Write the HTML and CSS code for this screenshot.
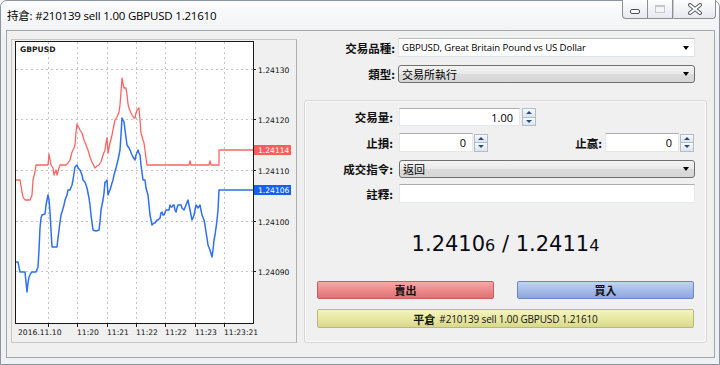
FILE: index.html
```html
<!DOCTYPE html>
<html>
<head>
<meta charset="utf-8">
<link rel="stylesheet" href="styles.css">
</head>
<body>
<div class="window">
  <div class="titlebar">
    <div class="title">持倉: #210139 sell 1.00 GBPUSD 1.21610</div>
    <div class="wbtns">
      <div class="wbtn wmin"><span class="minbar"></span></div>
      <div class="wbtn wmax"><span class="maxbox"></span></div>
      <div class="wbtn wclose">
        <svg width="16" height="12" viewBox="0 0 16 12"><path d="M3 2 L13 10 M13 2 L3 10" stroke="#5b6068" stroke-width="4" stroke-linecap="round" fill="none"/><path d="M3 2 L13 10 M13 2 L3 10" stroke="#fff" stroke-width="2" stroke-linecap="round" fill="none"/></svg>
      </div>
    </div>
  </div>
  <div class="client">
    <div class="chartpanel">
      <svg class="chart" width="284" height="302" viewBox="12 40 284 302">
        <rect x="15.5" y="41.5" width="238" height="282" fill="#fff"/>
        <g stroke="#c4c4c4" stroke-width="1" stroke-dasharray="2 3">
          <line x1="16" y1="69.5" x2="253" y2="69.5"/>
          <line x1="16" y1="119.5" x2="253" y2="119.5"/>
          <line x1="16" y1="170.5" x2="253" y2="170.5"/>
          <line x1="16" y1="221.5" x2="253" y2="221.5"/>
          <line x1="16" y1="271.5" x2="253" y2="271.5"/>
          <line x1="48.5" y1="42" x2="48.5" y2="323"/>
          <line x1="77.5" y1="42" x2="77.5" y2="323"/>
          <line x1="107.5" y1="42" x2="107.5" y2="323"/>
          <line x1="136.5" y1="42" x2="136.5" y2="323"/>
          <line x1="165.5" y1="42" x2="165.5" y2="323"/>
          <line x1="195.5" y1="42" x2="195.5" y2="323"/>
          <line x1="224.5" y1="42" x2="224.5" y2="323"/>
        </g>
        <polyline fill="none" stroke="#ff6464" stroke-width="1.3" stroke-linejoin="round" points="16,180 20,180 22,192 23,197 25,200 30,200 32,195 33,180 35,172 36,165 48,165 49,154 51,165 53,168 54,175 56,170 57,175 59,168 60,165 66,165 68,163 70,160 72,152 74,148 75,145 76,132 77,124 79,128 80,130 82,133 84,140 86,145 88,150 90,157 92,162 94,166 95,168 97,166 99,165 101,162 103,155 105,150 106,143 107,138 108,153 109,148 110,143 112,135 113,130 114,125 115,120 117,117 119,112 120,105 121,92 122,78 123,84 124,88 126,88 127,95 128,104 129,108 131,113 132,115 134,118 135,118 136,113 137,110 139,108 140,120 141,133 143,140 144,143 145,150 146,158 147,165 189,165 190,161 191,165 209,165 210,161 211,165 219,165 219,150 253,150"/>
        <polyline fill="none" stroke="#2f6ff2" stroke-width="1.5" stroke-linejoin="round" points="16,262 18,262 20,272 25,272 26,282 27,292 28,283 29,277 31,273 32,272 36,272 38,267 39,250 40,228 41,218 42,215 45,214 46,205 48,195 49,200 50,212 51,230 52,247 57,247 58,238 60,222 61,215 62,212 64,205 65,200 67,195 68,190 70,190 72,185 73,180 75,167 77,165 78,168 80,170 82,175 83,180 85,182 87,188 88,193 89,198 90,205 91,215 93,230 96,231 99,230 100,222 101,210 103,200 104,193 105,182 106,182 107,180 108,195 109,192 110,190 112,183 113,180 114,175 116,168 118,160 120,150 121,135 122,118 123,120 124,122 125,130 127,145 129,148 130,150 132,155 133,157 135,160 136,155 138,150 139,153 140,155 141,165 143,180 145,180 146,188 148,195 149,205 150,215 152,225 154,223 155,223 157,220 158,220 160,218 161,213 162,212 163,215 164,215 166,210 167,210 169,210 170,205 171,207 172,207 173,205 174,205 175,210 176,212 177,208 178,205 181,205 182,208 184,210 186,205 188,200 189,205 190,210 191,215 192,220 193,218 194,215 195,210 196,205 198,208 200,205 201,210 202,215 204,220 205,225 206,232 207,238 208,245 210,250 212,257 213,250 214,240 215,235 216,228 217,220 218,210 219,190 253,190"/>
        <rect x="15.5" y="41.5" width="238" height="282" fill="none" stroke="#1a1a1a" stroke-width="1"/>
        <g stroke="#1a1a1a" stroke-width="1">
          <line x1="253" y1="69.5" x2="256" y2="69.5"/>
          <line x1="253" y1="119.5" x2="256" y2="119.5"/>
          <line x1="253" y1="170.5" x2="256" y2="170.5"/>
          <line x1="253" y1="221.5" x2="256" y2="221.5"/>
          <line x1="253" y1="271.5" x2="256" y2="271.5"/>
          <line x1="48.5" y1="323" x2="48.5" y2="327"/>
          <line x1="77.5" y1="323" x2="77.5" y2="327"/>
          <line x1="107.5" y1="323" x2="107.5" y2="327"/>
          <line x1="136.5" y1="323" x2="136.5" y2="327"/>
          <line x1="165.5" y1="323" x2="165.5" y2="327"/>
          <line x1="195.5" y1="323" x2="195.5" y2="327"/>
          <line x1="224.5" y1="323" x2="224.5" y2="327"/>
        </g>
        <text class="sym" x="20" y="52">GBPUSD</text>
        <g class="ax">
          <text x="258" y="72.5">1.24130</text>
          <text x="258" y="122.5">1.24120</text>
          <text x="258" y="173.5">1.24110</text>
          <text x="258" y="224.5">1.24100</text>
          <text x="258" y="274.5">1.24090</text>
          <text x="18" y="335">2016.11.10</text>
          <text x="77" y="335">11:20</text>
          <text x="107" y="335">11:21</text>
          <text x="136" y="335">11:22</text>
          <text x="165" y="335">11:22</text>
          <text x="195" y="335">11:23</text>
          <text x="224" y="335">11:23:21</text>
        </g>
        <rect x="254" y="145" width="37" height="10" fill="#ff5c5c"/>
        <rect x="254" y="185" width="37" height="10" fill="#1660f0"/>
        <g class="ax tag">
          <text x="258" y="153">1.24114</text>
          <text x="258" y="193">1.24106</text>
        </g>
      </svg>
    </div>
    <div class="side">
      <div class="toprow">
        <div class="lbl wide">交易品種:</div>
        <div class="combo flat"><span class="ctext sym-name">GBPUSD, Great Britain Pound vs US Dollar</span><span class="arrow"></span></div>
      </div>
      <div class="toprow r2">
        <div class="lbl wide">類型:</div>
        <div class="combo btnlike"><span class="ctext">交易所執行</span><span class="arrow"></span></div>
      </div>
      <div class="group">
        <div class="grow">
          <div class="lbl">交易量:</div>
          <div class="field vol"><span class="latin">1.00</span></div>
          <div class="spin"><div class="sup"><i class="tu"></i></div><div class="sdn"><i class="td"></i></div></div>
        </div>
        <div class="grow g2">
          <div class="lbl">止損:</div>
          <div class="field small"><span class="latin">0</span></div>
          <div class="spin s1"><div class="sup"><i class="tu"></i></div><div class="sdn"><i class="td"></i></div></div>
          <div class="lbl tp">止贏:</div>
          <div class="field small"><span class="latin">0</span></div>
          <div class="spin s1"><div class="sup"><i class="tu"></i></div><div class="sdn"><i class="td"></i></div></div>
        </div>
        <div class="grow g3">
          <div class="lbl">成交指令:</div>
          <div class="combo btnlike full"><span class="ctext">返回</span><span class="arrow"></span></div>
        </div>
        <div class="grow g4">
          <div class="lbl">註釋:</div>
          <div class="field full"></div>
        </div>
        <div class="price"><span>1.2410<small>6</small> / 1.2411<small>4</small></span></div>
        <div class="btnrow">
          <div class="abtn sell">賣出</div>
          <div class="abtn buy">買入</div>
        </div>
        <div class="abtn closebtn">平倉 <span class="latin">#210139 sell 1.00 GBPUSD 1.21610</span></div>
      </div>
    </div>
  </div>
</div>
</body>
</html>
```

FILE: styles.css
```css
* { box-sizing: border-box; }
html, body { margin: 0; padding: 0; }
body {
  width: 720px; height: 365px; overflow: hidden;
  background: #f4f6f8;
  font-family: "Noto Sans CJK TC", sans-serif;
}
.window {
  width: 720px; height: 365px;
  border: 1px solid #8f959c;
  border-radius: 7px 7px 0 0;
  background: linear-gradient(#fcfcfd, #eef0f3 40px, #eef0f3);
}
.titlebar {
  height: 29px;
  display: flex;
  justify-content: space-between;
  align-items: flex-start;
}
.title {
  margin: 7px 0 0 6px;
  font-family: "Open Sans", "Noto Sans CJK TC", sans-serif;
  font-size: 11.5px;
  letter-spacing: -0.2px;
  line-height: 16px;
  color: #000;
}
.wbtns {
  display: flex;
  margin-right: 3px;
  margin-top: -1px;
}
.wbtn {
  height: 19px;
  border: 1px solid #8a8f96;
  border-top: none;
  background: linear-gradient(#fdfdfd, #e6e9ee);
  display: flex; align-items: center; justify-content: center;
}
.wmin { width: 26px; border-radius: 0 0 0 4px; }
.wmax { width: 25px; border-left: none; }
.wclose { width: 43px; border-left: 1px solid #c8ccd2; border-radius: 0 0 4px 0; }
.minbar {
  width: 10px; height: 5px; margin-top: 4px;
  border: 1px solid #4c5158; border-radius: 2px; background: #fff;
}
.maxbox {
  width: 10px; height: 8px;
  border: 1px solid #c4c8ce; border-top-width: 2px; background: #f4f5f7;
}
.client {
  margin-left: 5px;
  width: 709px; height: 328px;
  border: 1px solid #a2a7ad;
  background: #f0f0f0;
  padding: 7px 0 0 4px;
  display: flex;
  align-items: flex-start;
}
.chartpanel {
  margin-top: 1px;
  width: 286px; height: 304px;
  border: 1px solid #c6c6c6;
  border-right-color: #b0b0b0;
  background: #f0f0f0;
}
.chart { display: block; }
.chart .sym { font-family: "DejaVu Sans", sans-serif; font-size: 7.6px; font-weight: bold; fill: #222; }
.chart .ax { font-family: "DejaVu Sans", sans-serif; font-size: 7.6px; fill: #111; }
.chart .tag { fill: #fff; }
.side {
  padding-left: 7px;
  flex: 1;
}
.toprow { display: flex; align-items: center; height: 19px; }
.toprow.r2 { margin-top: 8px; height: 18px; }
.lbl {
  width: 88px; flex: none;
  text-align: right;
  font-size: 11.5px; font-weight: bold;
  color: #111;
  margin-right: 6px;
}
.lbl.wide { width: 91px; margin-right: 3px; }
.latin { font-family: "Open Sans", "Noto Sans CJK TC", sans-serif; }
.combo {
  width: 297px; height: 100%;
  display: flex; align-items: center; justify-content: space-between;
  padding: 0 4px 0 3px;
  font-size: 11px;
  color: #000;
}
.combo.flat {
  background: #fff;
  border: 1px solid #dde3ea; border-top-color: #b5bcc6;
}
.combo.btnlike {
  background: linear-gradient(#f4f4f4, #e9e9e9 50%, #dcdcdc 51%, #d6d6d6);
  border: 1px solid #707070; border-radius: 3px;
}
.combo.full { width: 296px; }
.ctext { line-height: 14px; }
.combo .sym-name { font-family: "Open Sans", sans-serif; font-size: 9.6px; letter-spacing: -0.1px; }
.arrow {
  width: 0; height: 0;
  border-left: 3.5px solid transparent; border-right: 3.5px solid transparent;
  border-top: 4px solid #000;
  margin-right: 1px;
}
.group {
  margin-top: 17px;
  width: 403px; height: 243px;
  border: 1px solid #d6d6d6;
  border-radius: 3px;
  box-shadow: inset 1px 1px 0 #fbfbfb, inset -1px -1px 0 #fbfbfb;
  background: #f0f0f0;
  padding-top: 7px;
}
.grow { display: flex; align-items: center; height: 18px; }
.grow.g2 { margin-top: 7px; height: 19px; }
.grow.g3 { margin-top: 8px; height: 18px; }
.grow.g4 { margin-top: 6px; height: 19px; }
.field {
  height: 100%;
  background: #fff;
  border: 1px solid #e3e9ef; border-top-color: #abadb3;
  display: flex; align-items: center; justify-content: flex-end;
  padding-right: 6px;
  font-size: 11px; color: #000;
}
.field.vol { width: 121px; }
.field.small { width: 74px; }
.field.full { width: 296px; }
.spin { width: 14px; height: 18px; margin-left: 2px; display: flex; flex-direction: column; }
.spin.s1 { margin-left: 1px; }
.sup, .sdn {
  flex: 1;
  border: 1px solid #b3bdc9;
  background: linear-gradient(#f8fafc, #dde4ec);
  display: flex; align-items: center; justify-content: center;
}
.sdn { border-top: none; }
.tu, .td { width: 0; height: 0; border-left: 3px solid transparent; border-right: 3px solid transparent; }
.tu { border-bottom: 3px solid #2d4b78; }
.td { border-top: 3px solid #2d4b78; }
.lbl.tp { width: 114px; margin-right: 3px; }
.price {
  height: 78px;
  display: flex; align-items: center; justify-content: center;
  padding-top: 4px;
  font-family: "DejaVu Sans", sans-serif;
  font-size: 21px;
  color: #0a0a14;
}
.price small { font-size: 16px; }
.btnrow { display: flex; gap: 23px; margin-left: 12px; }
.abtn {
  height: 18px;
  display: flex; align-items: center; justify-content: center;
  font-size: 11px; font-weight: bold; color: #111;
  border-radius: 2px;
}
.sell {
  width: 177px;
  background: linear-gradient(#f6a9a9, #ec8b8b 50%, #df7373);
  border: 1px solid #c35e5e;
}
.buy {
  width: 177px;
  background: linear-gradient(#c2d4f3, #a6bce8 50%, #8ea8dd);
  border: 1px solid #6c88c2;
}
.closebtn {
  margin: 10px 0 0 12px;
  width: 377px; height: 19px;
  background: linear-gradient(#f4f4bd, #e8e8a4 50%, #d9d98c);
  border: 1px solid #b9b97a;
}
.closebtn .latin { font-weight: normal; font-size: 10px; margin-left: 4px; letter-spacing: -0.15px; }
```
